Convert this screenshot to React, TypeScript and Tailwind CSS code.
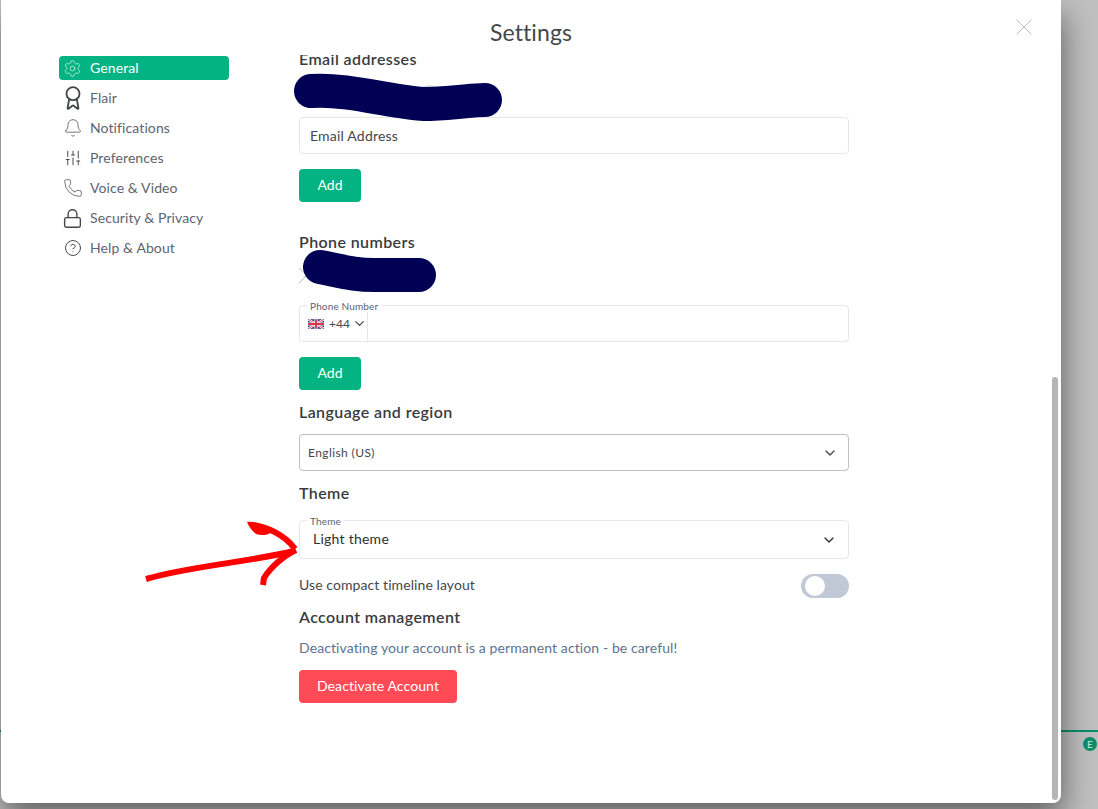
import React from "react";
import { Award, Bell, ChevronDown, CircleHelp, Lock, Phone, Settings, SlidersVertical, X } from "lucide-react";

const tabs = [
  { label: "General", icon: Settings, size: 19, stroke: 1 },
  { label: "Flair", icon: Award, size: 26, stroke: 1.7 },
  { label: "Notifications", icon: Bell, size: 20, stroke: 0.9 },
  { label: "Preferences", icon: SlidersVertical, size: 18, stroke: 1.3 },
  { label: "Voice & Video", icon: Phone, size: 20, stroke: 0.9 },
  { label: "Security & Privacy", icon: Lock, size: 21, stroke: 1.6 },
  { label: "Help & About", icon: CircleHelp, size: 18, stroke: 1.3 },
];

function Heading({ children }: { children: React.ReactNode }) {
  return <h3 className="h-5 text-[16px] leading-[18px] font-semibold tracking-[0.4px] text-[#3a3b3e]">{children}</h3>;
}

function AddButton() {
  return (
    <button className="w-[62px] h-[33px] pb-[2px] rounded bg-[#03b381] text-white text-[14px]">Add</button>
  );
}

function UkFlag() {
  return (
    <svg width="16" height="10" viewBox="0 0 60 36">
      <rect width="60" height="36" fill="#2b3f86" />
      <path d="M0 0L60 36M60 0L0 36" stroke="#fff" strokeWidth="8" />
      <path d="M0 0L60 36M60 0L0 36" stroke="#d8344a" strokeWidth="3" />
      <path d="M30 0V36M0 18H60" stroke="#fff" strokeWidth="12" />
      <path d="M30 0V36M0 18H60" stroke="#d8344a" strokeWidth="7" />
    </svg>
  );
}

export default function App() {
  return (
    <div className="relative flex w-[1098px] h-[809px] overflow-hidden bg-[#bfbfbf] font-['Lato',sans-serif]">
      <div className="w-px pt-[730px]">
        <div className="h-0.5 bg-[#0a8f6b]" />
      </div>

      <div className="relative z-10 flex flex-col w-[1060px] h-[803px] bg-white rounded-b-lg shadow-[2px_15px_30px_rgba(0,0,0,0.48)]">
        <div className="grid grid-cols-[1fr_auto_1fr] h-[55px] pt-[19px]">
          <div />
          <h1 className="text-[23px] leading-[27px] tracking-[0.1px] text-[#45474a]">Settings</h1>
          <X className="justify-self-end mr-[23px] -mt-[6px]" size={28} strokeWidth={0.7} color="#b0b0b0" />
        </div>

        <div className="flex flex-1 min-h-0">
          <nav className="w-[298px] pl-[58px] pt-px flex flex-col gap-[6px] shrink-0">
            {tabs.map((t, i) => {
              const Icon = t.icon;
              const active = i === 0;
              return (
                <div
                  key={t.label}
                  className={`flex items-center w-[170px] h-6 pb-[2px] rounded text-[14px] tracking-[0.1px] ${active ? "bg-[#03b381] text-white" : "text-[#5c6470]"}`}
                >
                  <span className="flex justify-center w-[27px] h-5 items-center mr-1 mt-[2px] shrink-0">
                    <Icon
                      className="shrink-0"
                      size={t.size}
                      strokeWidth={t.stroke}
                      color={active ? "#c8f0e2" : "#45474a"}
                    />
                  </span>
                  {t.label}
                </div>
              );
            })}
          </nav>

          <div className="w-[550px] overflow-hidden text-[#2e2f32]">
            <div className="-mt-[5px]">
              <Heading>Email addresses</Heading>
              <div className="mt-[47px] flex items-center h-[37px] px-[10px] border border-[#e7e7e7] rounded text-[14px] tracking-[0.2px] text-[#45474a]">
                Email Address
              </div>
              <div className="mt-[15px]">
                <AddButton />
              </div>

              <div className="mt-[31px]">
                <Heading>Phone numbers</Heading>
              </div>
              <div className="relative mt-[52px] flex h-[37px] border border-[#e7e7e7] rounded">
                <span className="absolute left-[7px] -top-[6px] px-[3px] bg-white text-[10px] leading-3 tracking-[0.15px] text-[#5c6470]">
                  Phone Number
                </span>
                <div className="flex items-center gap-[5px] w-[68px] pl-2 border-r border-[#e7e7e7] text-[12px] text-[#45474a]">
                  <UkFlag />
                  <span className="flex items-center gap-[2px]">
                    +44
                    <ChevronDown size={15} strokeWidth={2} />
                  </span>
                </div>
              </div>
              <div className="mt-[15px]">
                <AddButton />
              </div>

              <div className="mt-[13px]">
                <Heading>Language and region</Heading>
              </div>
              <div className="mt-[11px] flex items-center justify-between h-[37px] pl-2 pr-[10px] border border-[#bfbfbf] rounded text-[12px] tracking-[0.4px] text-[#45474a]">
                English (US)
                <ChevronDown size={16} strokeWidth={2} />
              </div>

              <div className="mt-[13px]">
                <Heading>Theme</Heading>
              </div>
              <div className="relative mt-[16px] flex items-center justify-between h-[39px] pl-[13px] pr-[11px] border border-[#e7e7e7] rounded text-[14px] tracking-[0.25px]">
                <span className="absolute left-[7px] -top-[6px] px-[3px] bg-white text-[10px] leading-3 tracking-[0.15px] text-[#5c6470]">
                  Theme
                </span>
                <span className="-mt-[2px]">Light theme</span>
                <ChevronDown size={16} strokeWidth={2} />
              </div>

              <div className="mt-[15px] flex items-center justify-between h-6 text-[14px] tracking-[0.08px] text-[#45474a]">
                <span className="-mt-[4px]">Use compact timeline layout</span>
                <div className="flex items-center w-12 h-6 px-1 rounded-full bg-[#c1c9d6]">
                  <div className="w-5 h-5 rounded-full bg-white" />
                </div>
              </div>

              <div className="mt-[10px]">
                <Heading>Account management</Heading>
              </div>
              <p className="mt-[10px] text-[14px] leading-5 tracking-[0.1px] text-[#5c7290]">
                Deactivating your account is a permanent action - be careful!
              </p>
              <button className="mt-[12px] w-[158px] h-[33px] pb-[2px] rounded bg-[#ff4b55] text-white text-[14px] tracking-[0.1px]">
                Deactivate Account
              </button>
            </div>
          </div>

          <div className="flex flex-1 justify-end pr-[3px] pt-[322px] pb-[3px]">
            <div className="w-[6px] h-full rounded bg-[#b5b5b5]" />
          </div>
        </div>

        {/* scribbles drawn on top of the screenshot */}
        <svg className="absolute left-0 top-0 pointer-events-none" width="1060" height="803" viewBox="1 0 1060 803" fill="none">
          <path d="M422 89C426 85 432 85 436 89" stroke="#d4d4d4" strokeWidth="1.5" />
          <path d="M311 91C350 88 400 105 430 104S470 100 485 100" stroke="#000054" strokeWidth="34" strokeLinecap="round" />
          <path d="M299 268L307 275L299 283" stroke="#b4bccb" strokeWidth="1" />
          <path d="M320 267C345 272 355 275 375 275H419" stroke="#000054" strokeWidth="34" strokeLinecap="round" />
          <path d="M146 579C190 566 250 562 294 551" stroke="#ff0000" strokeWidth="6" />
          <path d="M252 525C266 526 285 535 295 549" stroke="#ff0000" strokeWidth="6" />
          <path d="M247 522C255 521 268 526 272 531C270 535 262 536 256 534C252 531 249 527 247 522Z" fill="#ff0000" />
          <path d="M296 550C283 556 270 568 264 578L263 585" stroke="#ff0000" strokeWidth="6" />
        </svg>
      </div>

      <div className="flex-1 pt-[730px]">
        <div className="h-0.5 bg-[#0a8f6b]" />
        <div className="flex justify-end pt-[5px] pr-px">
          <div className="flex items-center justify-center w-[14px] h-[14px] rounded-full bg-[#0a8f6b] text-[10px] text-[#c8f0e2]">
            E
          </div>
        </div>
      </div>
    </div>
  );
}
